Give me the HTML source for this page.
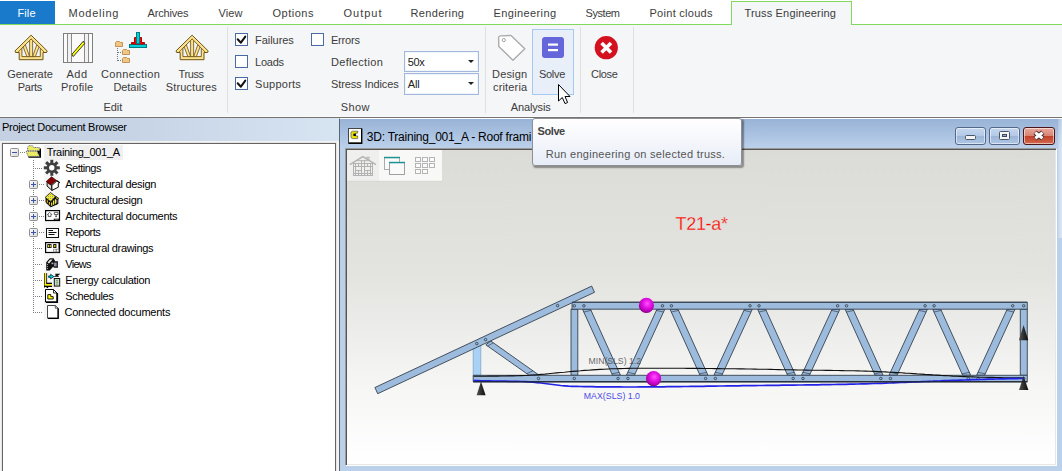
<!DOCTYPE html>
<html>
<head>
<meta charset="utf-8">
<title>Truss Engineering</title>
<style>
html,body{margin:0;padding:0;}
body{width:1062px;height:471px;overflow:hidden;position:relative;background:#fff;font-family:"Liberation Sans",sans-serif;font-size:12px;color:#444;}
.abs{position:absolute;}
.t{position:absolute;white-space:nowrap;line-height:14px;font-size:11px;color:#3c3c3c;}
.c{text-align:center;}
/* tab bar */
#tabs{position:absolute;left:0;top:0;width:1062px;height:24px;background:#fff;}
#greenline{position:absolute;left:0;top:24px;width:1062px;height:1px;background:#82d95c;}
#filetab{position:absolute;left:0;top:1px;width:55px;height:23px;background:#1979ca;}
#acttab{position:absolute;left:731px;top:1px;width:121px;height:24px;background:#f5f6f7;border:1px solid #82d95c;border-bottom:none;box-sizing:border-box;}
/* ribbon */
#ribbon{position:absolute;left:0;top:25px;width:1062px;height:91px;background:#f5f6f7;}
.sep{position:absolute;top:27px;width:1px;height:86px;background:#dfe0e2;}
.cb{position:absolute;width:13px;height:13px;box-sizing:border-box;border:1px solid #4a6aa5;background:#fff;}
.dd{position:absolute;width:75px;height:22px;box-sizing:border-box;border:1px solid #a3b8dc;background:#fff;box-shadow:inset 0 0 0 1px #f0f4fb;}
.arrow{position:absolute;width:0;height:0;border-left:3px solid transparent;border-right:3px solid transparent;border-top:3px solid #222;}
/* left panel */
#lp{position:absolute;left:0;top:118px;width:339px;height:353px;background:#f4f4f4;}
#lphead{position:absolute;left:0;top:0;width:339px;height:23px;background:linear-gradient(90deg,#c3d1e3 0%,#c6d4e6 40%,#d7e4f2 100%);}
#tree{position:absolute;left:2px;top:25px;width:334px;height:340px;box-sizing:border-box;border:1px solid #646464;background:#fff;box-shadow:0 0 0 1px #e4e4e4;}
.ti{position:absolute;white-space:nowrap;font-size:11px;line-height:16px;color:#000;}
.pm{position:absolute;width:9px;height:9px;box-sizing:border-box;border:1px solid #919191;border-radius:1.5px;background:linear-gradient(135deg,#fff,#e2e2e2);}
.pm:before{content:"";position:absolute;left:1.5px;top:3px;width:4px;height:1px;background:#4b63a7;border-left:0.5px solid #4b63a7;border-right:0.5px solid #4b63a7}
.pm.plus:after{content:"";position:absolute;left:3px;top:1px;width:1px;height:5px;background:#4b63a7;}
.dh{position:absolute;height:1px;background-image:linear-gradient(90deg,#808080 50%,transparent 50%);background-size:2px 1px;}
.dv{position:absolute;width:1px;background-image:linear-gradient(#808080 50%,transparent 50%);background-size:1px 2px;}
/* mdi window */
#win{position:absolute;left:339px;top:118px;width:723px;height:353px;background:#bad0eb;border-left:1px solid #5c6670;border-top:1px solid #fbfcfe;box-sizing:border-box;}
#wtitle{position:absolute;left:0;top:0;width:722px;height:31px;background:linear-gradient(#98b3d7 0%,#a9c1e0 45%,#bdd2ec 100%);}
#client{position:absolute;left:5px;top:29px;width:712px;height:318px;box-sizing:border-box;border:1px solid #9a9a9a;border-right-color:#fff;border-bottom-color:#fff;box-shadow:inset 1px 1px 0 #555,inset -1px -1px 0 #e6e6e6;background:linear-gradient(#dbdcd7 0%,#e3e4e0 40%,#f6f6f5 75%,#fff 100%);}
.wb{position:absolute;top:8px;width:31px;height:18px;box-sizing:border-box;border:1px solid #56688a;border-radius:3px;background:linear-gradient(#c5d7ef 0%,#b3c9e6 48%,#9cb6d8 52%,#afc7e5 100%);box-shadow:inset 0 0 0 1px rgba(255,255,255,.55);}
#wclose{border-color:#4a1418;background:linear-gradient(#e8a99c 0%,#d98373 48%,#c2402a 52%,#cf6a4e 100%);}
/* tooltip */
#tip{position:absolute;left:532px;top:118px;width:210px;height:48px;box-sizing:border-box;border:1px solid #8e9096;border-radius:3px;background:linear-gradient(#ffffff 0%,#f4f6fb 50%,#e6ecf7 100%);box-shadow:1.5px 1.5px 1.5px rgba(0,0,0,.38);}
</style>
</head>
<body>
<!-- TAB BAR -->
<div id="tabs"></div>
<div id="greenline"></div>
<div id="filetab"></div>
<div id="acttab"></div>
<div class="t" id="tbFile" style="left:17.5px;top:6px;color:#fff;letter-spacing:0.09px;">File</div>
<div class="t" id="tbModeling" style="left:68.5px;top:6px;letter-spacing:0.76px;">Modeling</div>
<div class="t" id="tbArchives" style="left:147.5px;top:6px;letter-spacing:-0.17px;">Archives</div>
<div class="t" id="tbView" style="left:218.5px;top:6px;letter-spacing:0.12px;">View</div>
<div class="t" id="tbOptions" style="left:272.5px;top:6px;letter-spacing:0.51px;">Options</div>
<div class="t" id="tbOutput" style="left:343.5px;top:6px;letter-spacing:0.99px;">Output</div>
<div class="t" id="tbRendering" style="left:410.5px;top:6px;letter-spacing:0.34px;">Rendering</div>
<div class="t" id="tbEngineering" style="left:493.5px;top:6px;letter-spacing:0.38px;">Engineering</div>
<div class="t" id="tbSystem" style="left:585.5px;top:6px;letter-spacing:-0.44px;">System</div>
<div class="t" id="tbPoint" style="left:649.5px;top:6px;letter-spacing:0.28px;">Point clouds</div>
<div class="t" id="tbTruss" style="left:744.5px;top:6px;letter-spacing:0.16px;">Truss Engineering</div>

<!-- RIBBON -->
<div id="ribbon"></div>
<div class="abs" style="left:0;top:116px;width:1062px;height:1px;background:#fafafa;"></div>
<div class="abs" style="left:0;top:117px;width:1062px;height:1px;background:#747474;"></div>
<div class="sep" style="left:227px;"></div>
<div class="sep" style="left:485px;"></div>
<div class="sep" style="left:580px;"></div>
<div class="sep" style="left:633px;"></div>

<div class="abs" style="left:532px;top:29px;width:42px;height:66px;box-sizing:border-box;border:1px solid #a6c9f1;background:#e8eff8;"></div>
<!-- ribbon icons -->
<svg class="abs" id="ricons" style="left:0;top:25px;" width="660" height="92" viewBox="0 25 660 92">
<defs>
<g id="trussico">
  <path d="M16.1 0.2 L32.2 15.9 L31.6 17.5 L28 17.5 L28 24.7 L4.2 24.7 L4.2 17.5 L0.6 17.5 L0 15.9 Z" fill="#fbe38c" stroke="#6e5218" stroke-width="1" stroke-linejoin="round"/>
  <path d="M16.1 4 L25.3 13.1 L25.3 21.6 L6.9 21.6 L6.9 13.1 Z" fill="#f3f3f7" stroke="#6e5218" stroke-width="0.9" stroke-linejoin="miter"/>
  <path d="M6.9 13.1 L3 17.2 M25.3 13.1 L29.2 17.2" fill="none" stroke="#6e5218" stroke-width="0.8"/>
  <path d="M8.2 12 L10.4 9.8 L14.6 21.6 L11.9 21.6 Z" fill="#fbe38c" stroke="#6e5218" stroke-width="0.8"/>
  <path d="M24 12 L21.8 9.8 L17.6 21.6 L20.3 21.6 Z" fill="#fbe38c" stroke="#6e5218" stroke-width="0.8"/>
  <path d="M14.6 5.4 L14.6 21.6 L17.6 21.6 L17.6 5.4 L16.1 4 Z" fill="#fbe38c" stroke="#6e5218" stroke-width="0.8"/>
</g>
</defs>
<use href="#trussico" x="15" y="35"/>
<use href="#trussico" x="176" y="35"/>
<!-- add profile -->
<rect x="63.5" y="33.5" width="29" height="29" fill="#fafafa" stroke="#7f7f7f" stroke-width="1"/>
<rect x="68" y="34" width="4" height="28" fill="#f1f1f1"/>
<rect x="85" y="34" width="4" height="28" fill="#f1f1f1"/>
<path d="M67.5 34V62 M71.5 34V62 M84.5 34V62 M88.5 34V62" stroke="#8a8a8a" stroke-width="1" fill="none"/>
<path d="M72 54.2 L83.3 41.2 L84.6 43.6 L73.2 56.6 Z" fill="#ffff00" stroke="#222" stroke-width="0.9" stroke-linejoin="round"/>
<!-- connection details -->
<g fill="#f0c682" stroke="#c4935c" stroke-width="1">
 <path d="M115.5 42.5 L116.5 41.5 L119.5 41.5 L120.5 42.5 L122.5 42.5 L122.5 46.5 L115.5 46.5 Z"/>
 <path d="M122.5 50.5 L123.5 49.5 L126.5 49.5 L127.5 50.5 L129.5 50.5 L129.5 54.5 L122.5 54.5 Z"/>
 <path d="M122.5 58.5 L123.5 57.5 L126.5 57.5 L127.5 58.5 L129.5 58.5 L129.5 62.5 L122.5 62.5 Z"/>
</g>
<path d="M117.5 48V61 M118 52.5H122 M118 60.5H122" stroke="#777" stroke-width="1" stroke-dasharray="1 1" fill="none"/>
<rect x="129.5" y="44.5" width="17" height="3" fill="#00d2d6" stroke="#007c84" stroke-width="1"/>
<path d="M131.5 44 V42.5 H134.5 V37.5 H141.5 V42.5 H144.5 V44 Z" fill="#f00" stroke="#b00000" stroke-width="1"/>
<rect x="136.5" y="32.5" width="3" height="11" fill="#00d2d6" stroke="#007c84" stroke-width="1"/>
<!-- design criteria tag -->
<path d="M500.4 35.9 L511 35.5 L524.8 48.8 L513 60.2 L498.8 46.6 L498.6 37.8 Q498.6 36 500.4 35.9 Z" fill="#fff" stroke="#ababab" stroke-width="1.4" stroke-linejoin="round"/>
<circle cx="503.8" cy="40.1" r="1.6" fill="#fff" stroke="#a4a4a4" stroke-width="1"/>
<!-- solve -->
<rect x="542" y="37" width="22" height="21" rx="3" fill="#6466d9"/>
<rect x="548" y="43.5" width="10" height="2.2" fill="#fff"/>
<rect x="548" y="49" width="10" height="2.2" fill="#fff"/>
<!-- close -->
<circle cx="606.3" cy="47.7" r="11.6" fill="#d3111f"/>
<path d="M601.6 43 L611 52.4 M611 43 L601.6 52.4" stroke="#fff" stroke-width="3.6" stroke-linecap="butt"/>
<!-- cursor -->
<path d="M558.5 84.5 V101 L562.3 97.5 L565 103.6 L567.6 102.5 L565 96.5 H570 Z" fill="#fff" stroke="#000" stroke-width="1" stroke-linejoin="miter"/>
</svg>

<!-- ribbon labels -->
<div class="t" id="rGenerate" style="left:7.2px;top:67px;letter-spacing:-0.03px;">Generate</div>
<div class="t" id="rParts" style="left:17.8px;top:80px;letter-spacing:-0.30px;">Parts</div>
<div class="t" id="rAdd" style="left:66.5px;top:67px;letter-spacing:0.51px;">Add</div>
<div class="t" id="rProfile" style="left:61.0px;top:80px;letter-spacing:0.17px;">Profile</div>
<div class="t" id="rConn" style="left:100.9px;top:67px;letter-spacing:0.38px;">Connection</div>
<div class="t" id="rDetails" style="left:113.4px;top:80px;letter-spacing:-0.06px;">Details</div>
<div class="t" id="rTruss" style="left:178.5px;top:67px;letter-spacing:-0.40px;">Truss</div>
<div class="t" id="rStructures" style="left:165.8px;top:80px;letter-spacing:0.10px;">Structures</div>
<div class="t" id="gEdit" style="left:103.4px;top:100px;letter-spacing:-0.02px;">Edit</div>

<div class="cb" style="left:235px;top:33px;"><svg width="11" height="11" viewBox="0 0 11 11" style="position:absolute;left:0;top:0"><path d="M1.7 5.3 L4.9 8.7 L9.3 2.6" fill="none" stroke="#111" stroke-width="2" stroke-linecap="round" stroke-linejoin="round"/></svg></div>
<div class="cb" style="left:235px;top:55px;"></div>
<div class="cb" style="left:235px;top:77px;"><svg width="11" height="11" viewBox="0 0 11 11" style="position:absolute;left:0;top:0"><path d="M1.7 5.3 L4.9 8.7 L9.3 2.6" fill="none" stroke="#111" stroke-width="2" stroke-linecap="round" stroke-linejoin="round"/></svg></div>
<div class="cb" style="left:311px;top:33px;"></div>
<div class="t" id="lFailures" style="left:255.1px;top:33px;letter-spacing:-0.06px;">Failures</div>
<div class="t" id="lLoads" style="left:255.1px;top:55px;letter-spacing:-0.25px;">Loads</div>
<div class="t" id="lSupports" style="left:255.1px;top:77px;letter-spacing:0.25px;">Supports</div>
<div class="t" id="lErrors" style="left:330.9px;top:33px;letter-spacing:-0.15px;">Errors</div>
<div class="t" id="lDeflection" style="left:331.0px;top:55px;letter-spacing:0.32px;">Deflection</div>
<div class="t" id="lStress" style="left:331.0px;top:77px;letter-spacing:-0.11px;">Stress Indices</div>
<div class="dd" style="left:404px;top:51px;height:21px;"></div>
<div class="dd" style="left:404px;top:73px;"></div>
<div class="t" id="d50" style="left:407.8px;top:55px;color:#222;font-size:11px;letter-spacing:-0.37px;">50x</div>
<div class="t" id="dAll" style="left:407.8px;top:77px;color:#222;font-size:11px;letter-spacing:-0.16px;">All</div>
<div class="arrow" style="left:468px;top:60px;"></div>
<div class="arrow" style="left:468px;top:82px;"></div>
<div class="t" id="gShow" style="left:340.7px;top:100px;letter-spacing:0.39px;">Show</div>

<div class="t" id="rDesign" style="left:492.1px;top:67px;letter-spacing:0.15px;">Design</div>
<div class="t" id="rCriteria" style="left:493.1px;top:80px;letter-spacing:0.14px;">criteria</div>
<div class="t" id="rSolve" style="left:538.9px;top:67px;letter-spacing:-0.28px;">Solve</div>
<div class="t" id="rClose" style="left:591.1px;top:67px;letter-spacing:-0.33px;">Close</div>
<div class="t" id="gAnalysis" style="left:510.8px;top:100px;letter-spacing:-0.14px;">Analysis</div>

<!-- LEFT PANEL -->
<div id="lp">
  <div id="lphead"></div>
  <div id="tree"></div>
</div>
<!-- TREE -->
<div class="abs" style="left:44px;top:145px;width:79px;height:15px;background:#f0f0f0;"></div>
<div class="abs" style="left:44px;top:160px;width:16px;height:160px;background:#f6f6f6;"></div>
<div class="ti" id="tr0" style="left:46.7px;top:144px;letter-spacing:-0.30px;">Training_001_A</div>
<div class="ti" id="tr1" style="left:65.3px;top:160px;letter-spacing:-0.51px;">Settings</div>
<div class="ti" id="tr2" style="left:65.3px;top:176px;letter-spacing:-0.29px;">Architectural design</div>
<div class="ti" id="tr3" style="left:65.3px;top:192px;letter-spacing:-0.33px;">Structural design</div>
<div class="ti" id="tr4" style="left:65.3px;top:208px;letter-spacing:-0.26px;">Architectural documents</div>
<div class="ti" id="tr5" style="left:65.3px;top:224px;letter-spacing:-0.52px;">Reports</div>
<div class="ti" id="tr6" style="left:65.3px;top:240px;letter-spacing:-0.33px;">Structural drawings</div>
<div class="ti" id="tr7" style="left:65.3px;top:256px;letter-spacing:-0.74px;">Views</div>
<div class="ti" id="tr8" style="left:65.3px;top:272px;letter-spacing:-0.28px;">Energy calculation</div>
<div class="ti" id="tr9" style="left:65.3px;top:288px;letter-spacing:-0.37px;">Schedules</div>
<div class="ti" id="tr10" style="left:64.5px;top:304px;letter-spacing:-0.23px;">Connected documents</div>
<div class="dh" style="left:20px;top:152px;width:6px;"></div>
<div class="dv" style="left:33px;top:160px;height:153px;"></div>
<div class="dh" style="left:35px;top:168px;width:8px;"></div>
<div class="dh" style="left:39px;top:184px;width:5px;"></div>
<div class="dh" style="left:39px;top:200px;width:5px;"></div>
<div class="dh" style="left:39px;top:216px;width:5px;"></div>
<div class="dh" style="left:39px;top:232px;width:5px;"></div>
<div class="dh" style="left:35px;top:248px;width:8px;"></div>
<div class="dh" style="left:35px;top:264px;width:8px;"></div>
<div class="dh" style="left:35px;top:280px;width:8px;"></div>
<div class="dh" style="left:35px;top:296px;width:8px;"></div>
<div class="dh" style="left:35px;top:312px;width:8px;"></div>
<svg class="abs" style="left:10px;top:148px" width="9" height="9" viewBox="0 0 9 9"><defs><linearGradient id="pg10148" x1="0" y1="0" x2="1" y2="1"><stop offset="0" stop-color="#fff"/><stop offset="1" stop-color="#d6d6d6"/></linearGradient></defs><rect x="0.5" y="0.5" width="8" height="8" rx="1" fill="url(#pg10148)" stroke="#8f8f8f"/><path d="M2 4.5H7" stroke="#3c56a6" stroke-width="1" fill="none"/></svg>
<svg class="abs" style="left:29px;top:180px" width="9" height="9" viewBox="0 0 9 9"><defs><linearGradient id="pg29180" x1="0" y1="0" x2="1" y2="1"><stop offset="0" stop-color="#fff"/><stop offset="1" stop-color="#d6d6d6"/></linearGradient></defs><rect x="0.5" y="0.5" width="8" height="8" rx="1" fill="url(#pg29180)" stroke="#8f8f8f"/><path d="M2 4.5H7 M4.5 2V7" stroke="#3c56a6" stroke-width="1" fill="none"/></svg>
<svg class="abs" style="left:29px;top:196px" width="9" height="9" viewBox="0 0 9 9"><defs><linearGradient id="pg29196" x1="0" y1="0" x2="1" y2="1"><stop offset="0" stop-color="#fff"/><stop offset="1" stop-color="#d6d6d6"/></linearGradient></defs><rect x="0.5" y="0.5" width="8" height="8" rx="1" fill="url(#pg29196)" stroke="#8f8f8f"/><path d="M2 4.5H7 M4.5 2V7" stroke="#3c56a6" stroke-width="1" fill="none"/></svg>
<svg class="abs" style="left:29px;top:212px" width="9" height="9" viewBox="0 0 9 9"><defs><linearGradient id="pg29212" x1="0" y1="0" x2="1" y2="1"><stop offset="0" stop-color="#fff"/><stop offset="1" stop-color="#d6d6d6"/></linearGradient></defs><rect x="0.5" y="0.5" width="8" height="8" rx="1" fill="url(#pg29212)" stroke="#8f8f8f"/><path d="M2 4.5H7 M4.5 2V7" stroke="#3c56a6" stroke-width="1" fill="none"/></svg>
<svg class="abs" style="left:29px;top:228px" width="9" height="9" viewBox="0 0 9 9"><defs><linearGradient id="pg29228" x1="0" y1="0" x2="1" y2="1"><stop offset="0" stop-color="#fff"/><stop offset="1" stop-color="#d6d6d6"/></linearGradient></defs><rect x="0.5" y="0.5" width="8" height="8" rx="1" fill="url(#pg29228)" stroke="#8f8f8f"/><path d="M2 4.5H7 M4.5 2V7" stroke="#3c56a6" stroke-width="1" fill="none"/></svg>
<svg class="abs" id="ticons" style="left:24px;top:144px;" width="40" height="180" viewBox="24 144 40 180">
<defs>
<pattern id="ydots" width="2" height="2" patternUnits="userSpaceOnUse"><rect width="2" height="2" fill="#ffff00"/><rect width="1" height="1" fill="#d8d8c8"/><rect x="1" y="1" width="1" height="1" fill="#d8d8c8"/></pattern>
<pattern id="yhatch" width="2" height="2" patternUnits="userSpaceOnUse"><rect width="2" height="2" fill="#f2ea30"/><rect width="1" height="1" fill="#9a9a78"/></pattern>
</defs>
<!-- root folder (26..41, 145..158) -->
<path d="M39.6 148.5 H41 V157.8 H28.4 V156.2 H39.6 Z" fill="#000"/>
<path d="M36.6 150.6 L39.8 150.6 L39.8 157 Z" fill="#000"/>
<path d="M27.6 150.8 V147.2 L28.9 145.7 H32.6 L33.8 147.5 H39.3 V150.8 Z" fill="url(#ydots)" stroke="#34346e" stroke-width="0.7" stroke-dasharray="1.1 0.7"/>
<path d="M26.2 151.3 H37 L39.5 156.4 H28.1 Z" fill="url(#ydots)" stroke="#34346e" stroke-width="0.7" stroke-dasharray="1.1 0.7"/>
<!-- gear center (51.8,167.8) -->
<g transform="translate(51.8 167.8)" fill="#3f3f3f">
  <g id="teeth">
   <rect x="-1.5" y="-8" width="3" height="16"/>
   <rect x="-8" y="-1.5" width="16" height="3"/>
  </g>
  <use href="#teeth" transform="rotate(45)"/>
  <circle r="5.2"/>
  <circle r="2.7" fill="#fff"/>
</g>
<!-- arch design house at (44,176) -->
<g transform="translate(44 176)" stroke="#000" stroke-width="0.95" stroke-linejoin="round">
 <path d="M3.1 6 L3.1 10.1 L8 14.4 L7.8 9.5 Z" fill="#dcdcdc"/>
 <path d="M7.8 9.5 L12.9 4.9 L15.5 6.6 L14.3 7.3 L14.3 11.2 L8 14.4 Z" fill="#fffffa"/>
 <path d="M12.4 4.4 L15.8 6.6" fill="none" stroke-width="1.1"/>
 <path d="M7.55 0.8 L2.25 5.4 L7 9.1 L12.4 4.4 Z" fill="#860000" stroke="#300" stroke-width="0.7"/>
</g>
<!-- structural design at (44,192) -->
<g transform="translate(44 192)" stroke-linejoin="round">
 <path d="M2 6 L2 10.4 L6.7 14.8 L13.9 11.7 L13.9 7.2 L14.9 6.5 L11.6 4.2 L6.7 9.6 Z" fill="#0a0a0a" stroke="#000" stroke-width="0.9"/>
 <path d="M3.3 8.2V10.8 M5.4 10V12.7" stroke="#f2c200" stroke-width="1.1" fill="none"/>
 <path d="M7.7 10.4V13.8 M9.6 8.4V12.8 M11.5 7.2V11.8" stroke="#f6ee3a" stroke-width="1.2" fill="none"/>
 <path d="M12.8 7.8V10.8" stroke="#a8a8a8" stroke-width="0.9" fill="none"/>
 <path d="M12 5.9 L14.3 6.4" stroke="#f6ee3a" stroke-width="0.9" fill="none"/>
 <path d="M6.5 0.5 L1.2 5.4 L6.7 9.7 L11.6 4.4 Z" fill="url(#yhatch)" stroke="#111" stroke-width="0.8"/>
</g>
<!-- arch documents at (44,208) -->
<g transform="translate(44 208)">
 <rect x="1.6" y="2.6" width="13.9" height="9.9" fill="#fff" stroke="#000" stroke-width="1.2"/>
 <path d="M9.8 11.6 H15.4" fill="none" stroke="#000" stroke-width="1.8"/>
 <path d="M10.6 11.4 H14.4" fill="none" stroke="#ddd" stroke-width="0.5"/>
 <path d="M3.4 6.6 L5.6 4.3 L7.8 6.6 H6.9 V8.6 H4.3 V6.6 Z" fill="none" stroke="#3a3a3a" stroke-width="0.8"/>
 <path d="M10.3 4.4 H14 V6.6 H10.3 Z M12.1 6.6 V8.6 M11.2 8.6 H13" fill="none" stroke="#3a3a3a" stroke-width="0.8"/>
</g>
<!-- reports at (44,224) -->
<g transform="translate(44 224)">
 <rect x="2.5" y="4.5" width="12" height="9" fill="#fff" stroke="#111" stroke-width="1"/>
 <path d="M4.5 6.5 H9 M4.5 8.5 H12.5 M4.5 10.5 H10.5" stroke="#111" stroke-width="1" fill="none"/>
</g>
<!-- structural drawings at (44,240) -->
<g transform="translate(44 240)">
 <rect x="1.6" y="2.6" width="13.9" height="9.9" fill="#fff" stroke="#000" stroke-width="1.2"/>
 <path d="M15.3 2.5 V12.8" stroke="#000" stroke-width="1.5"/>
 <rect x="3.3" y="4.1" width="4.2" height="3.9" fill="#000"/>
 <rect x="9.2" y="4.1" width="3.2" height="3.9" fill="#000"/>
 <rect x="4.1" y="5" width="1" height="2.2" fill="#f4ea20"/><rect x="5.8" y="5" width="1" height="2.2" fill="#f4ea20"/>
 <rect x="10.2" y="5" width="1.2" height="2.2" fill="#f4ea20"/>
 <rect x="9.6" y="9.2" width="2.4" height="2.6" fill="#fff" stroke="#8a8a8a" stroke-width="0.8"/>
 <rect x="12.4" y="9.2" width="2.4" height="2.6" fill="#fff" stroke="#8a8a8a" stroke-width="0.8"/>
</g>
<!-- views camera at (44,256) -->
<g transform="translate(44 256)">
 <path d="M2.2 6.2 L5.8 2.2 L9.6 2.2 L11.2 5.2 L14 5.2 L14 11.8 L9.8 11.8 L9.2 10.6 L5.8 14.4 L2.2 14.4 Z" fill="#101010"/>
 <path d="M3.6 6.6 L6.2 3.6 L8.6 3.6 L5 7.4 Z" fill="#ececec"/>
 <path d="M3.4 8V13.4" stroke="#ddd" stroke-width="0.8" stroke-dasharray="1 1"/>
 <rect x="10" y="6.6" width="2.8" height="3.8" fill="#8c8ca2"/>
 <rect x="7.4" y="6.6" width="2" height="1.6" fill="#aaa"/>
 <rect x="12.8" y="6" width="1.2" height="5" fill="#2a2a3a"/>
</g>
<!-- energy at (44,272) -->
<g transform="translate(44 272)">
 <rect x="0" y="1.1" width="0.8" height="14.5" fill="#000"/>
 <rect x="0.8" y="1.1" width="1.5" height="14" fill="#ffef00"/>
 <rect x="2.3" y="1.1" width="0.8" height="10.6" fill="#000"/>
 <rect x="2.3" y="10.7" width="5.7" height="1.3" fill="#000"/>
 <rect x="0.8" y="12" width="7.3" height="1.7" fill="#ffef00"/>
 <rect x="0" y="13.7" width="8.1" height="1.3" fill="#000"/>
 <rect x="2.6" y="15" width="1.5" height="1" fill="#000"/>
 <path d="M4.6 3.9 H6.6 V2.3 L9.9 4.6 L6.6 6.9 V5.4 H4.6 Z" fill="#00dcea" stroke="#002830" stroke-width="0.8"/>
 <path d="M11.2 2.2 H14.6 L11.4 4.2 H14.8" fill="none" stroke="#000" stroke-width="1.1"/>
 <rect x="10.3" y="6.5" width="5.4" height="7.6" fill="#c4dcc2" stroke="#111" stroke-width="1"/>
 <path d="M12 8.4 H14 M12 10.3 H14 M12 12.2 H14" stroke="#7a927a" stroke-width="1"/>
</g>
<!-- schedules at (44,288) -->
<g transform="translate(44 288)">
 <path d="M1.5 1.5 H9.5 L13 5 V14 H1.5 Z" fill="#fff" stroke="#000" stroke-width="1"/>
 <path d="M2 14.3 H13.3 V5" fill="none" stroke="#000" stroke-width="1.6"/>
 <path d="M9.5 1.5 V5 H13" fill="none" stroke="#000" stroke-width="0.8"/>
 <path d="M3.8 6.6 H6.8 V8.6 H9.2 V11 H3.8 Z" fill="#ffff00" stroke="#000" stroke-width="0.9"/>
</g>
<!-- connected docs at (44,304) -->
<g transform="translate(44 304)">
 <path d="M3.5 1.5 H11.3 L14 4.2 V14.2 H3.5 Z" fill="#fff" stroke="#333" stroke-width="0.9"/>
 <path d="M4 14.4 H14.2 V4.2" fill="none" stroke="#000" stroke-width="1.3"/>
 <path d="M11.3 1.5 V4.2 H14" fill="none" stroke="#333" stroke-width="0.8"/>
</g>
</svg>
<div class="ti" id="pdb" style="left:1.9px;top:119px;letter-spacing:-0.25px;">Project Document Browser</div>

<!-- MDI WINDOW -->
<div id="win">
  <div id="wtitle"></div>
  <div id="client"></div>
  <div class="wb" id="wmin" style="left:615px;"></div>
  <div class="wb" id="wmax" style="left:649px;"></div>
  <div class="wb" id="wclose" style="left:683px;width:32px;"></div>
</div>

<!-- window chrome glyphs -->
<svg class="abs" id="chrome" style="left:340px;top:119px;" width="722" height="64" viewBox="340 119 722 64">
<!-- title icon -->
<rect x="348.5" y="128.5" width="13" height="14.5" fill="#fff" stroke="#444" stroke-width="1"/>
<path d="M348.5 143.3 H361.7 V128.5" fill="none" stroke="#000" stroke-width="1.4"/>
<path d="M351 132.2 L352.2 131.2 H358 L357.4 133.2 H355.6 V136 H357.8 L357.6 138.6 H352.2 L351 137.6 Z" fill="#e8e000" stroke="#555" stroke-width="0.7"/>
<rect x="353.4" y="133.6" width="2.4" height="2.4" fill="#000"/>
<!-- min glyph -->
<rect x="965.5" y="135.5" width="10" height="4" rx="1" fill="#f4f4f4" stroke="#4a5568" stroke-width="1"/>
<!-- max glyph -->
<rect x="999.5" y="131.5" width="10" height="8" rx="1" fill="#f4f4f4" stroke="#4a5568" stroke-width="1"/>
<rect x="1002.5" y="134.5" width="4" height="2" fill="#8fa8cc" stroke="#3c4a66" stroke-width="1"/>
<!-- close glyph -->
<path d="M1035 132.3 L1042.8 138.5 M1042.8 132.3 L1035 138.5" stroke="#4a2a30" stroke-width="4.8" stroke-linecap="butt"/>
<path d="M1035.3 132.6 L1042.5 138.2 M1042.5 132.6 L1035.3 138.2" stroke="#fff" stroke-width="3" stroke-linecap="butt"/>
<!-- toolbar -->
<rect x="347.5" y="150" width="95" height="31" fill="#f8f8f7"/>
<rect x="347.5" y="150" width="31.5" height="31" fill="#efefee"/>
<path d="M347.5 181.3 H442.7 V150" fill="none" stroke="#d4d4d2" stroke-width="0.8"/>
<!-- house icon -->
<g fill="none" stroke="#b2b2b2" stroke-width="1">
 <path d="M349.8 164.6 L362.8 156.6 L376 164.6" stroke-width="1.3"/>
 <path d="M367 157.2 V159.6 M369 157.2 V160.6 M366.6 157.2 H369.4"/>
 <rect x="353.5" y="163.5" width="19" height="12"/>
 <path d="M353.5 173.5 H372.5 M353.5 166.5 H372.5 M355.5 163.5 V175.5 M370.5 163.5 V175.5 M361.5 160 V175.5 M364.5 160 V175.5 M358.5 163.5 V166.5 M367.5 163.5 V166.5 M358.5 170.5 V175.5 M367.5 170.5 V175.5 M355.5 170.5 H361.5 M364.5 170.5 H370.5 M357 160.7 L368.6 160.7"/>
</g>
<!-- windows icon -->
<rect x="384.5" y="157.5" width="15" height="12" fill="#fafafa" stroke="#9a9a9a" stroke-width="0.8"/>
<rect x="384" y="156.8" width="16" height="1.5" fill="#1f9292"/>
<rect x="389.5" y="162.5" width="15" height="12" fill="#fafafa" stroke="#8a8a8a" stroke-width="0.8"/>
<rect x="389" y="161.8" width="16" height="1.5" fill="#1f9292"/>
<!-- grid icon -->
<g fill="#fbfbfb" stroke="#b4b4b4" stroke-width="1">
 <rect x="415.5" y="157.5" width="5" height="4"/><rect x="422.5" y="157.5" width="5" height="4"/><rect x="429.5" y="157.5" width="5" height="4"/>
 <rect x="415.5" y="163.5" width="5" height="4"/><rect x="422.5" y="163.5" width="5" height="4"/><rect x="429.5" y="163.5" width="5" height="4"/>
 <rect x="415.5" y="169.5" width="5" height="4"/><rect x="422.5" y="169.5" width="5" height="4"/>
</g>
</svg>
<div class="abs" style="left:1058px;top:119px;width:4px;height:119px;background:linear-gradient(90deg,rgba(255,255,255,.18),rgba(255,255,255,.5));"></div>
<div class="t" id="wtext" style="left:366.8px;top:130px;color:#000;letter-spacing:-0.23px;font-size:12px;">3D: Training_001_A - Roof frami</div>

<!-- 3D view drawing -->
<svg class="abs" id="scene" style="left:347px;top:150px;" width="708" height="314" viewBox="347 150 708 314">
<defs>
<radialGradient id="ball" cx="0.55" cy="0.38" r="0.62"><stop offset="0" stop-color="#ff52ff"/><stop offset="0.45" stop-color="#e412e4"/><stop offset="0.85" stop-color="#b000b0"/><stop offset="1" stop-color="#7a007a"/></radialGradient>
<linearGradient id="cone" x1="0" y1="0" x2="1" y2="0"><stop offset="0" stop-color="#555"/><stop offset="0.35" stop-color="#3a3a3a"/><stop offset="1" stop-color="#0c0c0c"/></linearGradient>
</defs>
<path d="M582.5 309.2 L590.5 309.2 L620.5 375.3 L612.5 375.3 Z" fill="#9dbbdc" stroke="#25303c" stroke-width="0.8" stroke-linejoin="round"/>
<path d="M583.8 312.0 L591.1 310.4 M611.8 373.9 L619.2 372.3" stroke="#25303c" stroke-width="0.6" fill="none"/>
<path d="M657.0 309.2 L664.8 309.2 L634.4 375.3 L626.4 375.3 Z" fill="#9dbbdc" stroke="#25303c" stroke-width="0.8" stroke-linejoin="round"/>
<path d="M656.4 310.4 L663.5 312.0 M627.7 372.3 L635.1 373.9" stroke="#25303c" stroke-width="0.6" fill="none"/>
<path d="M670.0 309.2 L678.0 309.2 L708.0 375.3 L700.0 375.3 Z" fill="#9dbbdc" stroke="#25303c" stroke-width="0.8" stroke-linejoin="round"/>
<path d="M671.3 312.0 L678.6 310.4 M699.3 373.9 L706.8 372.3" stroke="#25303c" stroke-width="0.6" fill="none"/>
<path d="M744.5 309.2 L752.3 309.2 L721.9 375.3 L713.9 375.3 Z" fill="#9dbbdc" stroke="#25303c" stroke-width="0.8" stroke-linejoin="round"/>
<path d="M743.9 310.4 L751.0 312.0 M715.2 372.3 L722.6 373.9" stroke="#25303c" stroke-width="0.6" fill="none"/>
<path d="M757.6 309.2 L765.6 309.2 L795.6 375.3 L787.6 375.3 Z" fill="#9dbbdc" stroke="#25303c" stroke-width="0.8" stroke-linejoin="round"/>
<path d="M758.9 312.0 L766.2 310.4 M786.9 373.9 L794.3 372.3" stroke="#25303c" stroke-width="0.6" fill="none"/>
<path d="M832.1 309.2 L839.9 309.2 L809.5 375.3 L801.5 375.3 Z" fill="#9dbbdc" stroke="#25303c" stroke-width="0.8" stroke-linejoin="round"/>
<path d="M831.5 310.4 L838.6 312.0 M802.8 372.3 L810.2 373.9" stroke="#25303c" stroke-width="0.6" fill="none"/>
<path d="M845.1 309.2 L853.1 309.2 L883.1 375.3 L875.1 375.3 Z" fill="#9dbbdc" stroke="#25303c" stroke-width="0.8" stroke-linejoin="round"/>
<path d="M846.4 312.0 L853.8 310.4 M874.4 373.9 L881.9 372.3" stroke="#25303c" stroke-width="0.6" fill="none"/>
<path d="M919.6 309.2 L927.4 309.2 L897.0 375.3 L889.0 375.3 Z" fill="#9dbbdc" stroke="#25303c" stroke-width="0.8" stroke-linejoin="round"/>
<path d="M919.0 310.4 L926.1 312.0 M890.3 372.3 L897.8 373.9" stroke="#25303c" stroke-width="0.6" fill="none"/>
<path d="M932.7 309.2 L940.7 309.2 L970.7 375.3 L962.7 375.3 Z" fill="#9dbbdc" stroke="#25303c" stroke-width="0.8" stroke-linejoin="round"/>
<path d="M934.0 312.0 L941.3 310.4 M962.0 373.9 L969.4 372.3" stroke="#25303c" stroke-width="0.6" fill="none"/>
<path d="M1007.2 309.2 L1015.0 309.2 L984.6 375.3 L976.6 375.3 Z" fill="#9dbbdc" stroke="#25303c" stroke-width="0.8" stroke-linejoin="round"/>
<path d="M1006.6 310.4 L1013.7 312.0 M977.9 372.3 L985.3 373.9" stroke="#25303c" stroke-width="0.6" fill="none"/>
<path d="M473.2 346.5 L480.8 343.0 L480.8 375.3 L473.2 375.3 Z" fill="#a9d1f6" stroke="#6d93b8" stroke-width="0.6" stroke-linejoin="round"/>
<path d="M485.8 344.8 L490.8 341.0 L539.3 375.3 L529.1 375.3 Z" fill="#9dbbdc" stroke="#25303c" stroke-width="0.8" stroke-linejoin="round"/>
<path d="M487.5 346.2 L493.3 342.8 M527 373.6 L533 370.8" stroke="#25303c" stroke-width="0.6" fill="none"/>
<path d="M571.0 309.2 L577.8 309.2 L577.8 375.3 L571.0 375.3 Z" fill="#9dbbdc" stroke="#25303c" stroke-width="0.8" stroke-linejoin="round"/>
<path d="M1020.3 309.2 L1027.3 309.2 L1027.3 375.3 L1020.3 375.3 Z" fill="#9dbbdc" stroke="#25303c" stroke-width="0.8" stroke-linejoin="round"/>
<path d="M572.0 302.3 L1027.3 302.3 L1027.3 309.2 L572.0 309.2 Z" fill="#9dbbdc" stroke="#25303c" stroke-width="0.8" stroke-linejoin="round"/>
<path d="M473.2 375.3 L1027.3 375.3 L1027.3 381.6 L473.2 381.6 Z" fill="#9dbbdc" stroke="#25303c" stroke-width="0.8" stroke-linejoin="round"/>
<path d="M377.7 393.7 L594.5 292.3 L591.7 286.1 L374.9 387.5 Z" fill="#9dbbdc" stroke="#25303c" stroke-width="0.8" stroke-linejoin="round"/>
<circle cx="583.9" cy="305.8" r="1.25" fill="none" stroke="#1c2630" stroke-width="0.7"/>
<circle cx="662.5" cy="305.8" r="1.25" fill="none" stroke="#1c2630" stroke-width="0.7"/>
<circle cx="618.1" cy="378.5" r="1.25" fill="none" stroke="#1c2630" stroke-width="0.7"/>
<circle cx="627.9" cy="378.5" r="1.25" fill="none" stroke="#1c2630" stroke-width="0.7"/>
<circle cx="671.4" cy="305.8" r="1.25" fill="none" stroke="#1c2630" stroke-width="0.7"/>
<circle cx="750.0" cy="305.8" r="1.25" fill="none" stroke="#1c2630" stroke-width="0.7"/>
<circle cx="705.6" cy="378.5" r="1.25" fill="none" stroke="#1c2630" stroke-width="0.7"/>
<circle cx="715.4" cy="378.5" r="1.25" fill="none" stroke="#1c2630" stroke-width="0.7"/>
<circle cx="759.0" cy="305.8" r="1.25" fill="none" stroke="#1c2630" stroke-width="0.7"/>
<circle cx="837.6" cy="305.8" r="1.25" fill="none" stroke="#1c2630" stroke-width="0.7"/>
<circle cx="793.2" cy="378.5" r="1.25" fill="none" stroke="#1c2630" stroke-width="0.7"/>
<circle cx="803.0" cy="378.5" r="1.25" fill="none" stroke="#1c2630" stroke-width="0.7"/>
<circle cx="846.5" cy="305.8" r="1.25" fill="none" stroke="#1c2630" stroke-width="0.7"/>
<circle cx="925.1" cy="305.8" r="1.25" fill="none" stroke="#1c2630" stroke-width="0.7"/>
<circle cx="880.8" cy="378.5" r="1.25" fill="none" stroke="#1c2630" stroke-width="0.7"/>
<circle cx="890.5" cy="378.5" r="1.25" fill="none" stroke="#1c2630" stroke-width="0.7"/>
<circle cx="934.1" cy="305.8" r="1.25" fill="none" stroke="#1c2630" stroke-width="0.7"/>
<circle cx="1012.7" cy="305.8" r="1.25" fill="none" stroke="#1c2630" stroke-width="0.7"/>
<circle cx="968.3" cy="378.5" r="1.25" fill="none" stroke="#1c2630" stroke-width="0.7"/>
<circle cx="978.1" cy="378.5" r="1.25" fill="none" stroke="#1c2630" stroke-width="0.7"/>
<circle cx="574.3" cy="305.8" r="1.25" fill="none" stroke="#1c2630" stroke-width="0.7"/>
<circle cx="1023.7" cy="305.8" r="1.25" fill="none" stroke="#1c2630" stroke-width="0.7"/>
<circle cx="574.3" cy="378.5" r="1.25" fill="none" stroke="#1c2630" stroke-width="0.7"/>
<circle cx="538.5" cy="378.5" r="1.25" fill="none" stroke="#1c2630" stroke-width="0.7"/>
<circle cx="485.6" cy="339.6" r="1.25" fill="none" stroke="#1c2630" stroke-width="0.7"/>
<circle cx="476.8" cy="343.6" r="1.25" fill="none" stroke="#1c2630" stroke-width="0.7"/>
<circle cx="557.6" cy="305.6" r="1.25" fill="none" stroke="#1c2630" stroke-width="0.7"/>
<circle cx="1023.7" cy="378.5" r="1.25" fill="none" stroke="#1c2630" stroke-width="0.7"/>
<path d="M473.5 376.2 L477.5 376.2 L481.4 376.2 L485.4 376.2 L489.3 376.1 L493.3 376.1 L497.3 376.1 L501.2 376.0 L505.2 376.0 L509.1 375.9 L513.1 375.9 L517.1 375.8 L521.0 375.6 L525.0 375.5 L528.9 375.3 L532.9 375.0 L536.9 374.7 L540.8 374.4 L544.8 374.1 L548.7 373.7 L552.7 373.3 L556.7 372.9 L560.6 372.5 L564.6 372.2 L568.6 371.8 L572.5 371.4 L576.5 371.1 L580.4 370.8 L584.4 370.4 L588.4 370.2 L592.3 369.9 L596.3 369.6 L600.2 369.4 L604.2 369.2 L608.2 369.0 L612.1 368.8 L616.1 368.7 L620.0 368.6 L624.0 368.5 L628.0 368.4 L631.9 368.3 L635.9 368.3 L639.8 368.2 L643.8 368.2 L647.8 368.2 L651.7 368.2 L655.7 368.2 L659.6 368.2 L663.6 368.2 L667.6 368.2 L671.5 368.2 L675.5 368.3 L679.4 368.3 L683.4 368.3 L687.4 368.4 L691.3 368.4 L695.3 368.4 L699.2 368.4 L703.2 368.5 L707.2 368.5 L711.1 368.5 L715.1 368.6 L719.0 368.6 L723.0 368.7 L727.0 368.7 L730.9 368.8 L734.9 368.8 L738.8 368.9 L742.8 368.9 L746.8 369.0 L750.7 369.0 L754.7 369.1 L758.7 369.2 L762.6 369.3 L766.6 369.3 L770.5 369.4 L774.5 369.5 L778.5 369.6 L782.4 369.7 L786.4 369.7 L790.3 369.8 L794.3 369.9 L798.3 370.0 L802.2 370.0 L806.2 370.1 L810.1 370.2 L814.1 370.2 L818.1 370.3 L822.0 370.3 L826.0 370.4 L829.9 370.4 L833.9 370.5 L837.9 370.5 L841.8 370.6 L845.8 370.7 L849.7 370.7 L853.7 370.8 L857.7 370.9 L861.6 371.0 L865.6 371.1 L869.5 371.3 L873.5 371.4 L877.5 371.6 L881.4 371.8 L885.4 371.9 L889.3 372.2 L893.3 372.4 L897.3 372.6 L901.2 372.8 L905.2 373.1 L909.1 373.3 L913.1 373.6 L917.1 373.9 L921.0 374.1 L925.0 374.4 L928.9 374.6 L932.9 374.9 L936.9 375.1 L940.8 375.4 L944.8 375.6 L948.8 375.8 L952.7 376.1 L956.7 376.3 L960.6 376.5 L964.6 376.6 L968.6 376.8 L972.5 376.9 L976.5 377.0 L980.4 377.2 L984.4 377.3 L988.4 377.4 L992.3 377.4 L996.3 377.5 L1000.2 377.6 L1004.2 377.7 L1008.2 377.7 L1012.1 377.8 L1016.1 377.9 L1020.0 377.9 L1024.0 378.0" fill="none" stroke="#111" stroke-width="1.1"/>
<path d="M473.5 380.6 L477.5 380.7 L481.4 380.8 L485.4 380.8 L489.3 380.9 L493.3 381.0 L497.3 381.1 L501.2 381.1 L505.2 381.2 L509.1 381.3 L513.1 381.3 L517.1 381.4 L521.0 381.5 L525.0 381.7 L528.9 381.9 L532.9 382.2 L536.9 382.6 L540.8 383.0 L544.8 383.5 L548.7 384.0 L552.7 384.5 L556.7 385.0 L560.6 385.5 L564.6 385.8 L568.6 386.1 L572.5 386.3 L576.5 386.4 L580.4 386.5 L584.4 386.6 L588.4 386.6 L592.3 386.7 L596.3 386.8 L600.2 386.8 L604.2 386.8 L608.2 386.9 L612.1 386.9 L616.1 386.9 L620.0 386.9 L624.0 387.0 L628.0 387.0 L631.9 387.0 L635.9 387.0 L639.8 386.9 L643.8 386.9 L647.8 386.9 L651.7 386.9 L655.7 386.9 L659.6 386.8 L663.6 386.8 L667.6 386.7 L671.5 386.7 L675.5 386.7 L679.4 386.6 L683.4 386.5 L687.4 386.5 L691.3 386.4 L695.3 386.4 L699.2 386.3 L703.2 386.3 L707.2 386.2 L711.1 386.2 L715.1 386.1 L719.0 386.0 L723.0 386.0 L727.0 385.9 L730.9 385.9 L734.9 385.8 L738.8 385.8 L742.8 385.7 L746.8 385.7 L750.7 385.6 L754.7 385.6 L758.7 385.5 L762.6 385.5 L766.6 385.4 L770.5 385.4 L774.5 385.3 L778.5 385.3 L782.4 385.2 L786.4 385.2 L790.3 385.1 L794.3 385.1 L798.3 385.0 L802.2 385.0 L806.2 384.9 L810.1 384.9 L814.1 384.8 L818.1 384.8 L822.0 384.7 L826.0 384.6 L829.9 384.6 L833.9 384.5 L837.9 384.4 L841.8 384.4 L845.8 384.3 L849.7 384.2 L853.7 384.1 L857.7 384.0 L861.6 383.9 L865.6 383.8 L869.5 383.7 L873.5 383.5 L877.5 383.4 L881.4 383.3 L885.4 383.1 L889.3 383.0 L893.3 382.8 L897.3 382.7 L901.2 382.5 L905.2 382.3 L909.1 382.2 L913.1 382.0 L917.1 381.8 L921.0 381.7 L925.0 381.5 L928.9 381.3 L932.9 381.2 L936.9 381.0 L940.8 380.9 L944.8 380.7 L948.8 380.6 L952.7 380.4 L956.7 380.3 L960.6 380.1 L964.6 380.0 L968.6 379.8 L972.5 379.7 L976.5 379.6 L980.4 379.5 L984.4 379.3 L988.4 379.2 L992.3 379.1 L996.3 379.0 L1000.2 378.9 L1004.2 378.8 L1008.2 378.7 L1012.1 378.6 L1016.1 378.6 L1020.0 378.5 L1024.0 378.4" fill="none" stroke="#2222e6" stroke-width="1.7"/>
<path d="M481 381.4 L485.6 395.3 L476.6 395.3 Z" fill="url(#cone)"/>
<path d="M1023.6 376 L1028.4 390 L1019 390 Z" fill="url(#cone)"/>
<path d="M1023.6 325 L1028.3 340.3 L1018.9 340.3 Z" fill="url(#cone)"/>
<path d="M473.2 381.9 H1027.3" stroke="#1a222c" stroke-width="1.1"/>
<path d="M572 302.2 H1027.3" stroke="#33404e" stroke-width="1"/>
<circle cx="646.4" cy="305.4" r="7.6" fill="url(#ball)"/>
<circle cx="653.6" cy="378.7" r="7.6" fill="url(#ball)"/>
<text id="sT21" x="675.5" y="230" font-family="Liberation Sans, sans-serif" font-size="18" fill="#ff0000" stroke="#e0e1dd" stroke-width="0.28" textLength="52.5" lengthAdjust="spacing">T21-a*</text>
<text id="sMax" x="583.8" y="399" font-family="Liberation Sans, sans-serif" font-size="9.4" fill="#4a4ae6" textLength="56.2" lengthAdjust="spacingAndGlyphs">MAX(SLS) 1.0</text>
<text id="sMin" x="588.5" y="363.6" font-family="Liberation Sans, sans-serif" font-size="9.4" fill="#444" opacity="0.78" textLength="52.5" lengthAdjust="spacingAndGlyphs">MIN(SLS) 1.2</text>
</svg>

<!-- TOOLTIP -->
<div id="tip"></div>
<div class="t" id="tipT" style="left:537.5px;top:124px;font-weight:bold;color:#444;letter-spacing:-0.41px;">Solve</div>
<div class="t" id="tipD" style="left:545.7px;top:147px;color:#555;letter-spacing:0.28px;">Run engineering on selected truss.</div>

</body>
</html>
